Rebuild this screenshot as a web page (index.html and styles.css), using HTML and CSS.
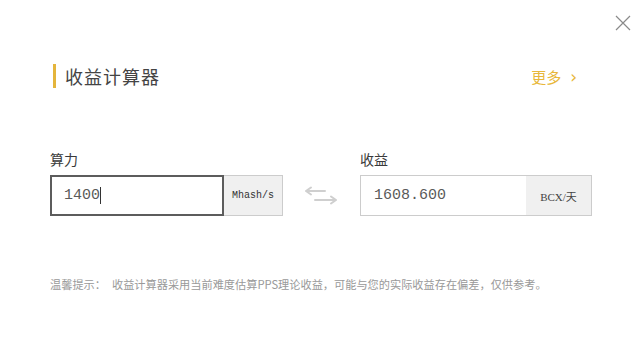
FILE: index.html
```html
<!DOCTYPE html>
<html lang="zh">
<head>
<meta charset="utf-8">
<title>收益计算器</title>
<link rel="stylesheet" href="styles.css">
</head>
<body>
<div class="modal">
  <button class="close" aria-label="关闭">
    <svg width="16" height="16" viewBox="0 0 16 16"><path d="M1 1 L15 15 M15 1 L1 15" stroke="#8a8a8a" stroke-width="1.2" fill="none"/></svg>
  </button>
  <div class="header">
    <h2 class="title">收益计算器</h2>
    <a class="more">更多<span class="chev">›</span></a>
  </div>
  <div class="calc">
    <div class="field field-left">
      <div class="label">算力</div>
      <div class="group group-focus">
        <div class="value">1400<span class="caret"></span></div>
        <div class="unit">Mhash/s</div>
      </div>
    </div>
    <div class="swap">
      <svg width="36" height="20" viewBox="0 0 36 20">
        <path d="M3 5 H22 M3 5 L8 1.5 M3 5 L8 8.5" stroke="#cfcfcf" stroke-width="2" fill="none" stroke-linecap="round"/>
        <path d="M12 14 H33 M33 14 L28 10.5 M33 14 L28 17.5" stroke="#cfcfcf" stroke-width="2" fill="none" stroke-linecap="round"/>
      </svg>
    </div>
    <div class="field field-right">
      <div class="label">收益</div>
      <div class="group">
        <div class="value">1608.600</div>
        <div class="unit unit-right">BCX/天</div>
      </div>
    </div>
  </div>
  <p class="hint"><span class="hint-label">温馨提示：</span>收益计算器采用当前难度估算PPS理论收益，可能与您的实际收益存在偏差，仅供参考。</p>
</div>
</body>
</html>
```

FILE: styles.css
```css
html, body {
  margin: 0;
  padding: 0;
  background: #ffffff;
}
body {
  font-family: "Noto Sans CJK SC", "Noto Sans", sans-serif;
  color: #333;
}
.modal {
  position: relative;
  width: 640px;
  height: 354px;
  background: #fff;
  overflow: hidden;
}
.close {
  position: absolute;
  top: 14px;
  right: 8px;
  width: 18px;
  height: 18px;
  padding: 0;
  border: 0;
  background: transparent;
  display: flex;
  align-items: center;
  justify-content: center;
}
.header {
  display: flex;
  align-items: center;
  justify-content: space-between;
  margin: 64px 63px 0 53px;
  height: 24px;
}
.title {
  margin: 0;
  height: 24px;
  border-left: 3px solid #e4b53c;
  padding-left: 9px;
  font-size: 18px;
  font-weight: normal;
  line-height: 24px;
  letter-spacing: 1px;
  color: #444;
}
.more {
  font-size: 15px;
  color: #e8b73a;
  line-height: 24px;
  display: flex;
  align-items: center;
  margin-top: 2px;
}
.chev {
  margin-left: 9px;
  font-size: 17px;
  font-family: "DejaVu Sans", sans-serif;
}
.calc {
  display: flex;
  align-items: flex-end;
  margin: 61px 0 0 50px;
}
.label {
  font-size: 14px;
  line-height: 20px;
  color: #3a3a3a;
  margin-bottom: 6px;
}
.group {
  display: flex;
  height: 41px;
  box-sizing: border-box;
  border: 1px solid #cccccc;
}
.field-left .group { width: 233px; }
.field-right .group { width: 232px; }
.group-focus {
  border: none;
}
.group-focus .value {
  border: 2px solid #5c5c5c;
  padding-left: 12px;
}
.value {
  flex: 1;
  box-sizing: border-box;
  display: flex;
  align-items: center;
  padding-left: 13px;
  font-family: "Liberation Mono", monospace;
  font-size: 15px;
  color: #5a5a5a;
  background: #fff;
}
.caret {
  display: inline-block;
  width: 1px;
  height: 17px;
  background: #333;
}
.unit {
  box-sizing: border-box;
  width: 59px;
  display: flex;
  align-items: center;
  justify-content: center;
  background: #f0f0f0;
  font-family: "Liberation Mono", monospace;
  font-size: 10px;
  color: #333;
  border: 1px solid #cccccc;
  border-left: 0;
}
.unit-right {
  width: 65px;
  border: 0;
  font-size: 11px;
  font-family: "Liberation Serif", "Noto Sans CJK SC", serif;
  color: #444;
}
.swap {
  width: 77px;
  height: 40px;
  display: flex;
  align-items: center;
  justify-content: center;
}
.swap svg { margin-left: -2px; }
.hint {
  margin: 60px 0 0 50px;
  font-size: 11.2px;
  line-height: 16px;
  color: #999;
}
.hint-label {
  margin-right: 6px;
}
```
